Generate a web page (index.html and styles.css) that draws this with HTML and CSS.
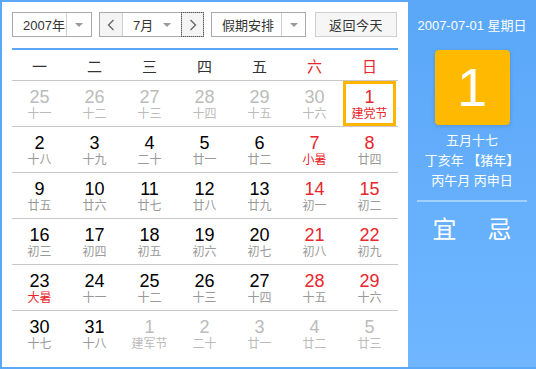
FILE: index.html
```html
<!DOCTYPE html>
<html lang="zh-CN">
<head>
<meta charset="utf-8">
<link rel="stylesheet" href="styles.css">
</head>
<body>
<div class="calendar">
  <div class="main">
    <div class="toolbar">
      <div class="select year">
        <span class="select-text">2007年</span>
        <span class="select-arrow"><i class="tri"></i></span>
      </div>
      <div class="month-group">
        <span class="nav prev"><svg width="8" height="12" viewBox="0 0 8 12"><polyline points="6.5,1 1.5,6 6.5,11" fill="none" stroke="#666" stroke-width="1.3"/></svg></span>
        <span class="month-text">7月</span>
        <span class="month-arrow"><i class="tri"></i></span>
        <span class="nav next"><svg width="8" height="12" viewBox="0 0 8 12"><polyline points="1.5,1 6.5,6 1.5,11" fill="none" stroke="#666" stroke-width="1.3"/></svg></span>
      </div>
      <div class="select holiday">
        <span class="select-text">假期安排</span>
        <span class="select-arrow"><i class="tri"></i></span>
      </div>
      <button class="today-btn">返回今天</button>
    </div>
    <div class="weekdays">
      <span>一</span><span>二</span><span>三</span><span>四</span><span>五</span><span class="wk">六</span><span class="wk">日</span>
    </div>
    <div class="days">
      <div class="row">
        <div class="day other"><b>25</b><em>十一</em></div>
        <div class="day other"><b>26</b><em>十二</em></div>
        <div class="day other"><b>27</b><em>十三</em></div>
        <div class="day other"><b>28</b><em>十四</em></div>
        <div class="day other"><b>29</b><em>十五</em></div>
        <div class="day other"><b>30</b><em>十六</em></div>
        <div class="day wk today"><b>1</b><em class="fest">建党节</em></div>
      </div>
      <div class="row">
        <div class="day"><b>2</b><em>十八</em></div>
        <div class="day"><b>3</b><em>十九</em></div>
        <div class="day"><b>4</b><em>二十</em></div>
        <div class="day"><b>5</b><em>廿一</em></div>
        <div class="day"><b>6</b><em>廿二</em></div>
        <div class="day wk"><b>7</b><em class="fest">小暑</em></div>
        <div class="day wk"><b>8</b><em>廿四</em></div>
      </div>
      <div class="row">
        <div class="day"><b>9</b><em>廿五</em></div>
        <div class="day"><b>10</b><em>廿六</em></div>
        <div class="day"><b>11</b><em>廿七</em></div>
        <div class="day"><b>12</b><em>廿八</em></div>
        <div class="day"><b>13</b><em>廿九</em></div>
        <div class="day wk"><b>14</b><em>初一</em></div>
        <div class="day wk"><b>15</b><em>初二</em></div>
      </div>
      <div class="row">
        <div class="day"><b>16</b><em>初三</em></div>
        <div class="day"><b>17</b><em>初四</em></div>
        <div class="day"><b>18</b><em>初五</em></div>
        <div class="day"><b>19</b><em>初六</em></div>
        <div class="day"><b>20</b><em>初七</em></div>
        <div class="day wk"><b>21</b><em>初八</em></div>
        <div class="day wk"><b>22</b><em>初九</em></div>
      </div>
      <div class="row">
        <div class="day"><b>23</b><em class="fest">大暑</em></div>
        <div class="day"><b>24</b><em>十一</em></div>
        <div class="day"><b>25</b><em>十二</em></div>
        <div class="day"><b>26</b><em>十三</em></div>
        <div class="day"><b>27</b><em>十四</em></div>
        <div class="day wk"><b>28</b><em>十五</em></div>
        <div class="day wk"><b>29</b><em>十六</em></div>
      </div>
      <div class="row last">
        <div class="day"><b>30</b><em>十七</em></div>
        <div class="day"><b>31</b><em>十八</em></div>
        <div class="day other"><b>1</b><em>建军节</em></div>
        <div class="day other"><b>2</b><em>二十</em></div>
        <div class="day other"><b>3</b><em>廿一</em></div>
        <div class="day other"><b>4</b><em>廿二</em></div>
        <div class="day other"><b>5</b><em>廿三</em></div>
      </div>
    </div>
  </div>
  <div class="side">
    <div class="side-date">2007-07-01 星期日</div>
    <div class="big-day">1</div>
    <div class="lunar">
      <div>五月十七</div>
      <div>丁亥年 【猪年】</div>
      <div>丙午月 丙申日</div>
    </div>
    <div class="sep"></div>
    <div class="yiji"><span>宜</span><span>忌</span></div>
  </div>
</div>
</body>
</html>
```

FILE: styles.css
```css
* { box-sizing: border-box; }
html, body { margin: 0; padding: 0; }
body {
  width: 536px;
  height: 369px;
  font-family: "Liberation Sans", "Noto Sans CJK SC", sans-serif;
  background: #fff;
  overflow: hidden;
}
.calendar {
  width: 536px;
  height: 369px;
  border: 2px solid #5ba8f8;
  border-right: 0;
  border-bottom-width: 2px;
  display: flex;
}
.main {
  width: 406px;
  background: #fff;
  padding: 10px 10px 0 10px;
}
.toolbar {
  display: flex;
  height: 25px;
  font-size: 13px;
  color: #333;
}
.select {
  display: flex;
  height: 25px;
  border: 1px solid #a9a9a9;
  background: #fff;
}
.select-text {
  display: flex;
  align-items: center;
  padding-left: 10px;
}
.select-arrow {
  display: flex;
  align-items: center;
  justify-content: center;
  width: 25px;
  border-left: 1px solid #d0d0d0;
  margin-left: auto;
}
.tri {
  display: block;
  width: 0;
  height: 0;
  border-left: 4px solid transparent;
  border-right: 4px solid transparent;
  border-top: 4px solid #9a9a9a;
}
.year { width: 80px; }
.month-group {
  display: flex;
  width: 105px;
  height: 25px;
  margin-left: 7px;
  border: 1px solid #a9a9a9;
  border-right: 0;
}
.nav {
  display: flex;
  align-items: center;
  justify-content: center;
  width: 23px;
  background: #f4f4f4;
}
.prev { border-right: 1px solid #d0d0d0; }
.next {
  outline: 1px dotted #555;
  outline-offset: -1px;
  height: 25px;
  margin-top: -1px;
  border: 1px solid #a9a9a9;
}
.month-text {
  display: flex;
  align-items: center;
  padding-left: 10px;
  flex: 1;
}
.month-arrow {
  display: flex;
  align-items: center;
  padding-right: 10px;
}
.holiday {
  width: 95px;
  margin-left: 7px;
}
.holiday .select-arrow { width: 24px; }
.today-btn {
  width: 82px;
  height: 25px;
  margin-left: 9px;
  border: 1px solid #cfcfcf;
  background: #f6f6f6;
  font: inherit;
  font-size: 13px;
  color: #333;
  padding: 0;
  letter-spacing: 0.5px;
}
.weekdays {
  margin-top: 11px;
  border-top: 2px solid #5ba5f5;
  border-bottom: 1px solid #c8c8c8;
  display: grid;
  grid-template-columns: repeat(7, 55px);
  height: 33px;
  align-items: center;
  font-size: 15px;
  color: #333;
}
.weekdays span { text-align: center; }
.weekdays .wk { color: #e8262c; }
.row {
  display: grid;
  grid-template-columns: repeat(7, 55px);
  height: 46px;
  border-bottom: 1px solid #c8c8c8;
}
.row.last { border-bottom: 0; }
.day {
  display: flex;
  flex-direction: column;
  align-items: center;
  padding-top: 6px;
}
.day b {
  font-weight: normal;
  font-size: 18px;
  line-height: 20px;
  color: #000;
}
.day em {
  font-style: normal;
  font-size: 12px;
  line-height: 14px;
  color: #999;
}
.day.wk b { color: #e8262c; }
.day em.fest { color: #e8262c; }
.day.other b { color: #bbb; }
.day.other em { color: #bbb; }
.day.today {
  border: 3px solid #ffb400;
  margin: 0 1px 0 1px;
  padding-top: 3px;
}
.side {
  flex: 1;
  background: linear-gradient(#5aa7f8, #6fb6ff);
  color: #fff;
  display: flex;
  flex-direction: column;
  align-items: center;
  padding-top: 16px;
}
.side-date {
  font-size: 13px;
  line-height: 16px;
}
.big-day {
  margin-top: 16px;
  width: 75px;
  height: 75px;
  border-radius: 4px;
  background: #ffba00;
  box-shadow: 0 1px 4px rgba(0, 0, 0, 0.15);
  font-size: 54px;
  line-height: 75px;
  text-align: center;
}
.lunar {
  margin-top: 6px;
  font-size: 13px;
  line-height: 20px;
  text-align: center;
}
.sep {
  margin-top: 9px;
  width: 110px;
  height: 2px;
  background: rgba(255, 255, 255, 0.4);
}
.yiji {
  margin-top: 15px;
  display: flex;
  gap: 31px;
  font-size: 24px;
  line-height: 26px;
}
```
